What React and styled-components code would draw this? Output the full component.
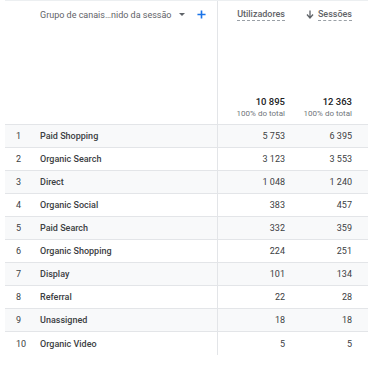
import React from "react";
import styled, { createGlobalStyle } from "styled-components";

const Global = createGlobalStyle`
  html, body { margin: 0; padding: 0; background: #fff; }
  body { font-family: Roboto, "Liberation Sans", Arial, sans-serif; }
`;

const Table = styled.div`
  margin-left: 5px;
  width: 363px;
  border-top: 1px solid #eceff1;
  color: #3c4043;
`;

const Grid = styled.div`
  display: grid;
  grid-template-columns: 35px 177px 84px 1fr;
`;

const HeaderRow = styled(Grid)`
  height: 123px;
  border-bottom: 1px solid #e3e5e8;
`;

const DimHeader = styled.div`
  grid-column: 2;
  display: flex;
  align-items: center;
  height: 27px;
  font-size: 9px;
  color: #5f6368;
`;

const DimLabel = styled.span`
  white-space: nowrap;
`;

const Caret = styled.span`
  flex-shrink: 0;
  width: 0;
  height: 0;
  margin-left: 7px;
  border-left: 3px solid transparent;
  border-right: 3px solid transparent;
  border-top: 3px solid #5f6368;
`;

const Plus = styled.svg`
  flex-shrink: 0;
  margin-left: 12px;
  width: 9px;
  height: 9px;
`;

const MetricHeader = styled.div`
  border-left: ${(p) => (p.$divider ? "1px solid #e3e5e8" : "none")};
  display: flex;
  flex-direction: column;
  justify-content: space-between;
  align-items: flex-end;
  padding: 0 16px 6px 0;
`;

const MetricTitle = styled.div`
  height: 27px;
  display: flex;
  align-items: center;
  gap: 4px;
  font-size: 9px;
  font-weight: 500;
  color: #5f6368;
`;

const Dotted = styled.span`
  border-bottom: 1px dashed #9aa0a6;
  line-height: 10px;
  padding-bottom: 1px;
`;

const Totals = styled.div`
  display: flex;
  flex-direction: column;
  align-items: flex-end;
  gap: 2px;
`;

const TotalValue = styled.div`
  font-size: 9.5px;
  color: #202124;
  font-weight: 500;
`;

const TotalSub = styled.div`
  font-size: 8px;
  color: #70757a;
`;

const Row = styled(Grid)`
  align-items: center;
  font-size: 9px;
  background: ${(p) => (p.$shaded ? "#f8f9fa" : "#fff")};
  border-bottom: ${(p) => (p.$last ? "none" : "1px solid #e3e5e8")};
  height: ${(p) => (p.$last ? "23px" : "22px")};
`;

const Num = styled.div`
  padding-left: 11px;
  color: #3c4043;
`;

const Label = styled.div`
  font-weight: 500;
  color: #3c4043;
`;

const Value = styled.div`
  height: 100%;
  display: flex;
  align-items: center;
  justify-content: flex-end;
  padding-right: 16px;
  color: #3c4043;
  border-left: ${(p) => (p.$divider ? "1px solid #e3e5e8" : "none")};
`;

const rows = [
  ["Paid Shopping", "5 753", "6 395"],
  ["Organic Search", "3 123", "3 553"],
  ["Direct", "1 048", "1 240"],
  ["Organic Social", "383", "457"],
  ["Paid Search", "332", "359"],
  ["Organic Shopping", "224", "251"],
  ["Display", "101", "134"],
  ["Referral", "22", "28"],
  ["Unassigned", "18", "18"],
  ["Organic Video", "5", "5"],
];

export default function App() {
  return (
    <>
      <Global />
      <Table>
        <HeaderRow>
          <div />
          <DimHeader>
            <DimLabel>Grupo de canais…nido da sessão</DimLabel>
            <Caret />
            <Plus viewBox="0 0 10 10">
              <path d="M5 0.5v9M0.5 5h9" stroke="#1a73e8" strokeWidth="1.8" />
            </Plus>
          </DimHeader>
          <MetricHeader $divider>
            <MetricTitle>
              <Dotted>Utilizadores</Dotted>
            </MetricTitle>
            <Totals>
              <TotalValue>10 895</TotalValue>
              <TotalSub>100% do total</TotalSub>
            </Totals>
          </MetricHeader>
          <MetricHeader>
            <MetricTitle>
              <svg width="8" height="9" viewBox="0 0 8 9">
                <path d="M4 0.5v7M1 4.5l3 3.5 3-3.5" stroke="#5f6368" strokeWidth="1.3" fill="none" />
              </svg>
              <Dotted>Sessões</Dotted>
            </MetricTitle>
            <Totals>
              <TotalValue>12 363</TotalValue>
              <TotalSub>100% do total</TotalSub>
            </Totals>
          </MetricHeader>
        </HeaderRow>
        {rows.map((r, i) => (
          <Row key={i} $shaded={i % 2 === 0} $last={i === rows.length - 1}>
            <Num>{i + 1}</Num>
            <Label>{r[0]}</Label>
            <Value $divider>{r[1]}</Value>
            <Value>{r[2]}</Value>
          </Row>
        ))}
      </Table>
    </>
  );
}
